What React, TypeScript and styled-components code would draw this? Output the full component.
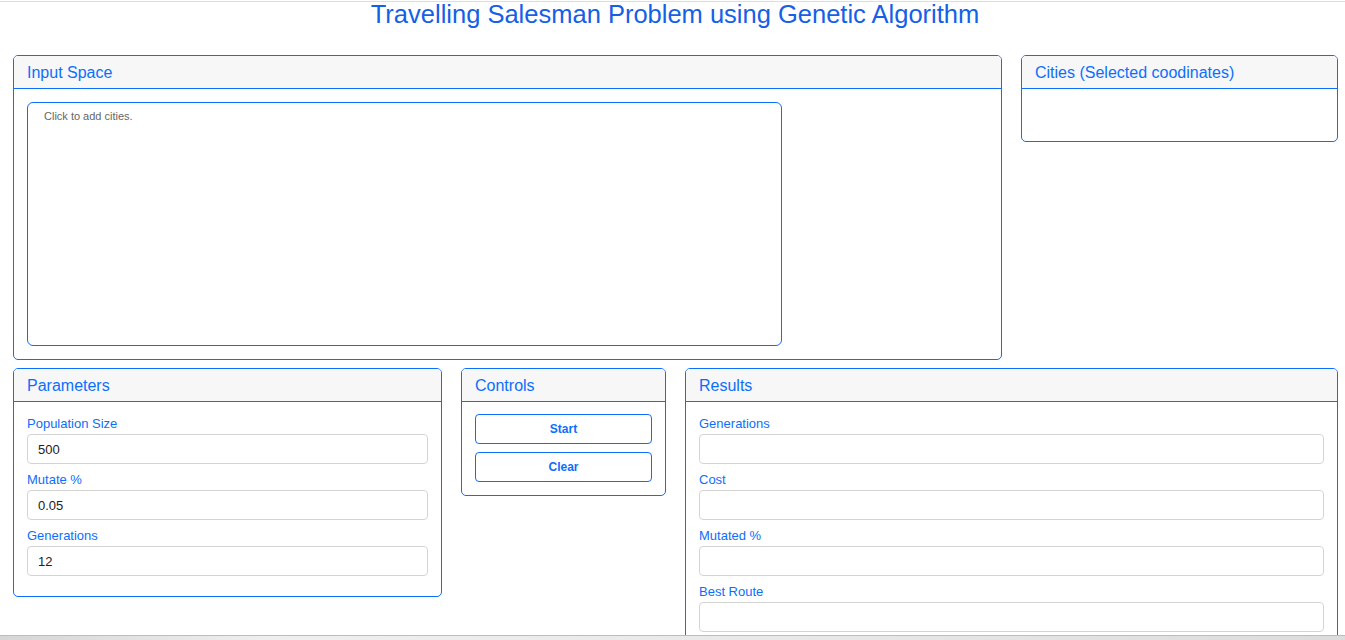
import * as React from 'react';
import styled, { createGlobalStyle } from 'styled-components';

const BLUE = '#0d6efd';

const GlobalStyle = createGlobalStyle`
  html, body {
    margin: 0;
    padding: 0;
    background: #fff;
    font-family: "Liberation Sans", Arial, sans-serif;
  }
`;

const Page = styled.div`
  border-top: 1px solid #dedede;
  margin-top: 1px;
  padding: 0 8px 0 13px;
`;

const Title = styled.h1`
  margin: 0;
  height: 53px;
  font-size: 25.5px;
  line-height: 24px;
  font-weight: normal;
  color: #1560e8;
  text-align: center;
`;

const Row = styled.div`
  display: flex;
  align-items: flex-start;
  gap: 19px;
  margin-bottom: 8px;
`;

const Card = styled.section<{ $width: number }>`
  width: ${(p) => p.$width}px;
  flex: none;
  box-sizing: border-box;
  border: 1px solid ${BLUE};
  border-radius: 5px;
  overflow: hidden;
`;

const CardHeader = styled.div`
  background: #f7f7f7;
  border-bottom: 1px solid ${BLUE};
  padding: 8px 13px 6px;
  font-size: 16px;
  line-height: 18px;
  color: ${BLUE};
`;

const CardBody = styled.div`
  padding: 15px 13px 20px;
`;

const InputBody = styled.div`
  padding: 13px;
`;

const CanvasBox = styled.div`
  width: 755px;
  height: 244px;
  box-sizing: border-box;
  border: 1px solid ${BLUE};
  border-radius: 6px;
  padding: 7px 16px;
  font-size: 11px;
  color: #666;
`;

const EmptyBody = styled.div`
  height: 52px;
`;

const Field = styled.div`
  display: flex;
  flex-direction: column;
  & + & {
    margin-top: 9px;
  }
`;

const Label = styled.label`
  font-size: 13px;
  line-height: 14px;
  color: ${BLUE};
  margin-bottom: 3px;
`;

const TextInput = styled.input`
  box-sizing: border-box;
  height: 30px;
  width: 100%;
  border: 1px solid #d4d4d4;
  border-radius: 4px;
  padding: 0 10px;
  font-family: "Liberation Sans", Arial, sans-serif;
  font-size: 13px;
  color: #222;
  outline: none;
`;

const ControlsBody = styled.div`
  display: flex;
  flex-direction: column;
  gap: 8px;
  padding: 12px 13px 13px;
`;

const Button = styled.button`
  box-sizing: border-box;
  height: 30px;
  width: 100%;
  background: #fff;
  border: 1px solid ${BLUE};
  border-radius: 4px;
  color: ${BLUE};
  font-family: "Liberation Sans", Arial, sans-serif;
  font-weight: bold;
  font-size: 12px;
  cursor: pointer;
`;

const BottomEdge = styled.div`
  position: fixed;
  left: 0;
  right: 0;
  bottom: 0;
  height: 4px;
  border-top: 1px solid #bdbdbd;
  background: linear-gradient(90deg, #d6d6d6 0%, #efefef 20%, #e8e8e8 60%, #dcdcdc 100%);
`;

interface IFieldProps {
  label: string;
  value?: string;
}

function FormField(props: IFieldProps) {
  const { label, value } = props;
  return (
    <Field>
      <Label>{label}</Label>
      <TextInput defaultValue={value ?? ''} />
    </Field>
  );
}

export default function App() {
  return (
    <>
      <GlobalStyle />
      <Page>
        <Title>Travelling Salesman Problem using Genetic Algorithm</Title>
        <Row>
          <Card $width={989}>
            <CardHeader>Input Space</CardHeader>
            <InputBody>
              <CanvasBox>Click to add cities.</CanvasBox>
            </InputBody>
          </Card>
          <Card $width={317}>
            <CardHeader>Cities (Selected coodinates)</CardHeader>
            <EmptyBody />
          </Card>
        </Row>
        <Row>
          <Card $width={429}>
            <CardHeader>Parameters</CardHeader>
            <CardBody>
              <FormField label="Population Size" value="500" />
              <FormField label="Mutate %" value="0.05" />
              <FormField label="Generations" value="12" />
            </CardBody>
          </Card>
          <Card $width={205}>
            <CardHeader>Controls</CardHeader>
            <ControlsBody>
              <Button>Start</Button>
              <Button>Clear</Button>
            </ControlsBody>
          </Card>
          <Card $width={653}>
            <CardHeader>Results</CardHeader>
            <CardBody>
              <FormField label="Generations" />
              <FormField label="Cost" />
              <FormField label="Mutated %" />
              <FormField label="Best Route" />
            </CardBody>
          </Card>
        </Row>
      </Page>
      <BottomEdge />
    </>
  );
}
